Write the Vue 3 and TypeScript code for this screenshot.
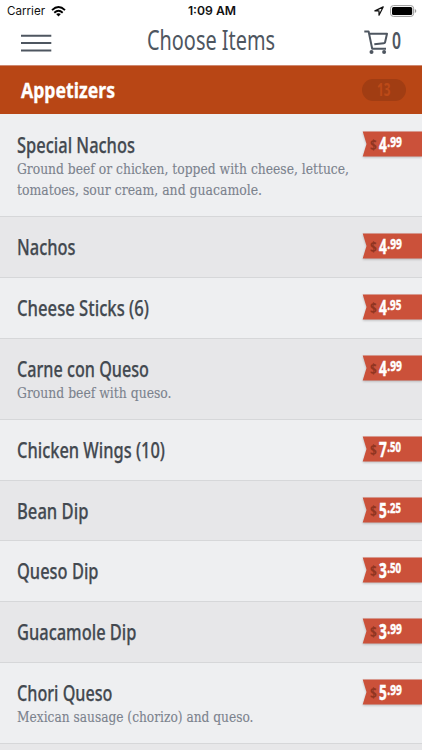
<script setup lang="ts">
interface Line {
  text: string
  width: number
}

interface MenuItem {
  name: string
  width: number
  dollars: string
  cents: string
  centsWidth: number
  lines: Line[]
}

const items: MenuItem[] = [
  {
    name: 'Special Nachos', width: 118, dollars: '4', cents: '.99', centsWidth: 14.5,
    lines: [
      { text: 'Ground beef or chicken, topped with cheese, lettuce,', width: 332 },
      { text: 'tomatoes, sour cream, and guacamole.', width: 245 },
    ],
  },
  { name: 'Nachos', width: 58.5, dollars: '4', cents: '.99', centsWidth: 14.5, lines: [] },
  { name: 'Cheese Sticks (6)', width: 132, dollars: '4', cents: '.95', centsWidth: 14, lines: [] },
  {
    name: 'Carne con Queso', width: 132, dollars: '4', cents: '.99', centsWidth: 14.5,
    lines: [{ text: 'Ground beef with queso.', width: 154.5 }],
  },
  { name: 'Chicken Wings (10)', width: 148, dollars: '7', cents: '.50', centsWidth: 13.5, lines: [] },
  { name: 'Bean Dip', width: 71.5, dollars: '5', cents: '.25', centsWidth: 13.5, lines: [] },
  { name: 'Queso Dip', width: 81.5, dollars: '3', cents: '.50', centsWidth: 13.8, lines: [] },
  { name: 'Guacamole Dip', width: 119.5, dollars: '3', cents: '.99', centsWidth: 14.5, lines: [] },
  {
    name: 'Chori Queso', width: 95.5, dollars: '5', cents: '.99', centsWidth: 14.5,
    lines: [{ text: 'Mexican sausage (chorizo) and queso.', width: 236.5 }],
  },
]
</script>

<template>
  <main class="screen">
    <div class="status">
      <div class="carrier">
        <span>Carrier</span>
        <svg width="15" height="11" viewBox="0 0 15 11" fill="none" stroke="#000" stroke-width="1.9">
          <path d="M1 4.1Q7.5-1.9 14 4.1M3.3 6.7Q7.5 2.9 11.7 6.7" />
          <path d="M7.5 10.5 5.1 8.1Q7.5 6.4 9.9 8.1Z" fill="#000" stroke="none" />
        </svg>
      </div>
      <span class="clock">1:09 AM</span>
      <div class="power">
        <svg width="10" height="10" viewBox="0 0 10 10" fill="none" stroke="#111" stroke-width="1.2" stroke-linejoin="round">
          <path d="M9.2.9.9 4.9H5V9.2Z" />
        </svg>
        <svg width="27" height="12" viewBox="0 0 27 12">
          <rect x=".6" y=".6" width="23" height="10.8" rx="2.8" fill="none" stroke="#999" />
          <rect x="2" y="2" width="20.2" height="8" rx="1.5" fill="#000" />
          <path d="M24.8 4Q26.3 4.6 26.3 6T24.8 8Z" fill="#999" />
        </svg>
      </div>
    </div>

    <header class="navbar">
      <svg class="burger" width="32" height="18" viewBox="0 0 32 18" stroke="#4e5660" stroke-width="2">
        <path d="M0 1.7H30.3M0 9H30.3M0 16.4H30.3" />
      </svg>
      <svg class="title" width="130" height="40">
        <text x="0" y="28.5" textLength="128" lengthAdjust="spacingAndGlyphs">Choose Items</text>
      </svg>
      <div class="cart">
        <svg width="26" height="25" viewBox="0 0 26 25" fill="none" stroke="#4e5660" stroke-width="2" stroke-linejoin="round">
          <path d="M.3 1.4H4.6L8.2 18.8H22M5.2 3.8H23L21 12.5Q20.8 13.2 19.8 13.3L10.3 14.2" />
          <circle cx="7.5" cy="22" r="2" fill="#4e5660" stroke="none" />
          <circle cx="20.1" cy="22" r="2" fill="#4e5660" stroke="none" />
        </svg>
        <svg class="count" width="10" height="25">
          <text x="0" y="19" textLength="9" lengthAdjust="spacingAndGlyphs">0</text>
        </svg>
      </div>
    </header>

    <section>
      <div class="category">
        <svg width="110" height="48">
          <text class="category-name" x="0" y="31.6" textLength="94" lengthAdjust="spacingAndGlyphs">Appetizers</text>
        </svg>
        <div class="badge">
          <svg width="14" height="22">
            <text x="0" y="17" textLength="13.5" lengthAdjust="spacingAndGlyphs">13</text>
          </svg>
        </div>
      </div>

      <ul class="menu">
        <li v-for="item in items" :key="item.name" class="item">
          <div class="details">
            <svg class="name" width="200" height="44">
              <text x="0" y="37.7" :textLength="item.width" lengthAdjust="spacingAndGlyphs">{{ item.name }}</text>
            </svg>
            <svg v-for="line in item.lines" :key="line.text" class="line" width="340" height="20.7">
              <text x="0" y="15.4" :textLength="line.width" lengthAdjust="spacingAndGlyphs">{{ line.text }}</text>
            </svg>
          </div>
          <svg class="price" width="60" height="26" viewBox="0 0 60 26">
            <path class="ribbon" d="M.7.5H60V25.5H.7L4.5 13Z" />
            <text>
              <tspan class="sign" x="8" y="18.5" textLength="6.8" lengthAdjust="spacingAndGlyphs">$</tspan>
              <tspan class="dollars" x="17" y="20.5" textLength="7.8" lengthAdjust="spacingAndGlyphs">{{ item.dollars }}</tspan>
              <tspan class="cents" x="25.3" y="15.6" :textLength="item.centsWidth" lengthAdjust="spacingAndGlyphs">{{ item.cents }}</tspan>
            </text>
          </svg>
        </li>
      </ul>
    </section>
  </main>
</template>

<style>
body {
  margin: 0;
  overflow: hidden;
}
</style>

<style scoped>
.screen {
  width: 422px;
  height: 750px;
  overflow: hidden;
  background: #e7e7e9;
  font-family: "Noto Sans", "Open Sans", sans-serif;
}

svg {
  display: block;
  flex: none;
  overflow: visible;
}

.status {
  display: grid;
  grid-template-columns: 1fr auto 1fr;
  align-items: center;
  height: 21px;
  padding: 0 5px 0 7px;
  background: #fff;
  color: #111;
  font: 11.6px/22px Inter, sans-serif;
}

.carrier,
.power {
  display: flex;
  align-items: center;
  gap: 6px;
}

.clock {
  font-weight: 600;
  font-size: 12.2px;
}

.power {
  justify-content: flex-end;
}

.navbar {
  display: flex;
  align-items: flex-start;
  height: 44px;
  padding: 0 20px;
  border-bottom: 1px solid #cf8870;
  background: #fff;
  fill: #4e5660;
}

.burger {
  margin: 13px 94px 0 1px;
}

.title {
  font-size: 26.5px;
  font-weight: 400;
}

.cart {
  display: flex;
  gap: 2px;
  margin: 9px 0 0 87px;
}

.count {
  font-size: 23px;
  font-weight: 600;
}

.category {
  display: flex;
  align-items: center;
  justify-content: space-between;
  height: 48px;
  padding: 0 16px 0 21px;
  background: #b84615;
}

.category-name {
  fill: #fff;
  font-size: 21.5px;
  font-weight: 700;
  stroke: #fff;
  stroke-width: 0.3px;
}

.badge {
  display: flex;
  justify-content: center;
  width: 44px;
  height: 22px;
  border-radius: 11px;
  background: #a13d13;
  fill: #bd4a18;
  font-size: 17px;
  font-weight: 700;
}

.menu {
  margin: 0;
  padding: 0;
  list-style: none;
}

.item {
  display: flex;
  justify-content: space-between;
  align-items: flex-start;
  box-sizing: border-box;
  padding: 0 0 15.73px 17px;
  border-bottom: 1px solid #d6d7d9;
  background: #eeeff1;
}

.item:first-child {
  padding-top: 1px;
}

.item:nth-child(even) {
  background: #e7e7e9;
}

.details {
  width: 340px;
}

.name {
  fill: #434950;
  stroke: #434950;
  stroke-width: 0.25px;
  font-size: 22px;
  font-weight: 500;
}

.line {
  fill: #7b828d;
  stroke: #7b828d;
  stroke-width: 0.1px;
  font-family: "DejaVu Serif", serif;
  font-size: 14.3px;
  font-stretch: condensed;
}

.price {
  margin-top: 16.1px;
  fill: #fff;
  font-weight: 700;
}

.ribbon {
  fill: #cb513a;
  filter: drop-shadow(0 1px 1px rgb(0 0 0 / 22%));
}

.sign {
  fill: #913521;
  font-size: 14px;
}

.dollars {
  font-size: 20.5px;
  stroke: #fff;
  stroke-width: 0.5px;
}

.cents {
  font-size: 14.5px;
  stroke: #fff;
  stroke-width: 0.5px;
}
</style>
